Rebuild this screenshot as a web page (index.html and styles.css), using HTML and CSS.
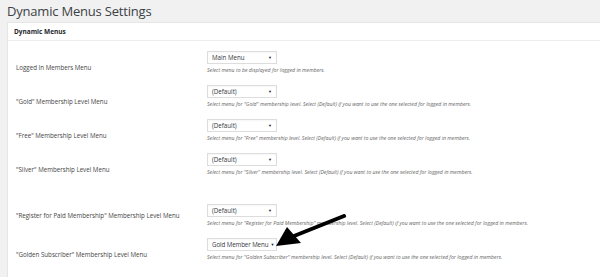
FILE: index.html
```html
<!DOCTYPE html>
<html lang="en">
<head>
  <meta charset="UTF-8">
  <title>Dynamic Menus Settings</title>
  <link rel="stylesheet" href="styles.css">
</head>
<body>
  <h1 class="page-title">Dynamic Menus Settings</h1>
  <div class="panel">
    <h2 class="panel-title">Dynamic Menus</h2>
    <div class="panel-body">
      <div class="form-row">
        <label class="row-label">Logged In Members Menu</label>
        <div class="row-field">
          <div class="select"><span>Main Menu</span><span class="caret">&#9660;</span></div>
          <p class="desc">Select menu to be displayed for logged in members.</p>
        </div>
      </div>
      <div class="form-row">
        <label class="row-label">"Gold" Membership Level Menu</label>
        <div class="row-field">
          <div class="select"><span>(Default)</span><span class="caret">&#9660;</span></div>
          <p class="desc">Select menu for "Gold" membership level. Select (Default) if you want to use the one selected for logged in members.</p>
        </div>
      </div>
      <div class="form-row">
        <label class="row-label">"Free" Membership Level Menu</label>
        <div class="row-field">
          <div class="select"><span>(Default)</span><span class="caret">&#9660;</span></div>
          <p class="desc">Select menu for "Free" membership level. Select (Default) if you want to use the one selected for logged in members.</p>
        </div>
      </div>
      <div class="form-row">
        <label class="row-label">"Silver" Membership Level Menu</label>
        <div class="row-field">
          <div class="select"><span>(Default)</span><span class="caret">&#9660;</span></div>
          <p class="desc">Select menu for "Silver" membership level. Select (Default) if you want to use the one selected for logged in members.</p>
        </div>
      </div>
      <div class="form-row spaced">
        <label class="row-label">"Register for Paid Membership" Membership Level Menu</label>
        <div class="row-field">
          <div class="select"><span>(Default)</span><span class="caret">&#9660;</span></div>
          <p class="desc">Select menu for "Register for Paid Membership" membership level. Select (Default) if you want to use the one selected for logged in members.</p>
        </div>
      </div>
      <div class="form-row">
        <label class="row-label">"Golden Subscriber" Membership Level Menu</label>
        <div class="row-field">
          <div class="select tight"><span>Gold Member Menu</span><span class="caret">&#9660;</span></div>
          <p class="desc">Select menu for "Golden Subscriber" membership level. Select (Default) if you want to use the one selected for logged in members.</p>
        </div>
      </div>
    </div>
  </div>

  <!-- annotation arrow over the last select -->
  <svg class="pointer" width="80" height="40" viewBox="0 0 80 40">
    <path d="M70 2 L20 22" stroke="#000" stroke-width="4" stroke-linecap="round"/>
    <polygon points="2,32 13,13 27,29" fill="#000"/>
  </svg>
</body>
</html>
```

FILE: styles.css
```css
body { margin: 0; background: #f1f1f1; font-family: "Open Sans", "Noto Sans", sans-serif; color: #444; position: relative; height: 277px; overflow: hidden; }
.page-title { margin: 0; padding: 2px 0 0 7px; height: 20px; font-size: 13px; font-weight: 400; color: #3c4146; letter-spacing: -0.2px; }
.panel { margin-left: 7px; background: #fff; border: 1px solid #e5e5e5; border-right: none; box-shadow: 0 1px 1px rgba(0,0,0,0.04); }
.panel-title { margin: 0; padding: 0 6px; height: 17px; line-height: 18px; font-size: 6.5px; font-weight: 700; color: #23282d; border-bottom: 1px solid #eee; }
.panel-body { padding: 10px 0 6px 8px; }
.form-row { display: grid; grid-template-columns: 191px 1fr; margin-bottom: 10px; }
.form-row.spaced { margin-top: 27px; }
.form-row.spaced .row-label { padding-top: 7px; }
.row-label { padding-top: 12px; font-size: 6.2px; color: #444; }
.select { width: 70px; height: 13px; border: 1px solid #ddd; box-shadow: inset 0 1px 2px rgba(0,0,0,0.04); display: flex; align-items: center; justify-content: space-between; padding: 0 4px; box-sizing: border-box; font-size: 6.2px; color: #32373c; white-space: nowrap; }
.select.tight { padding: 0 2px 0 4px; justify-content: flex-start; gap: 2px; letter-spacing: -0.1px; }
.caret { font-size: 4px; color: #222; }
.desc { margin: 2px 0 0; font-size: 5.2px; font-style: italic; color: #666; line-height: 9px; white-space: nowrap; }
.pointer { position: absolute; left: 274px; top: 214px; }
```
